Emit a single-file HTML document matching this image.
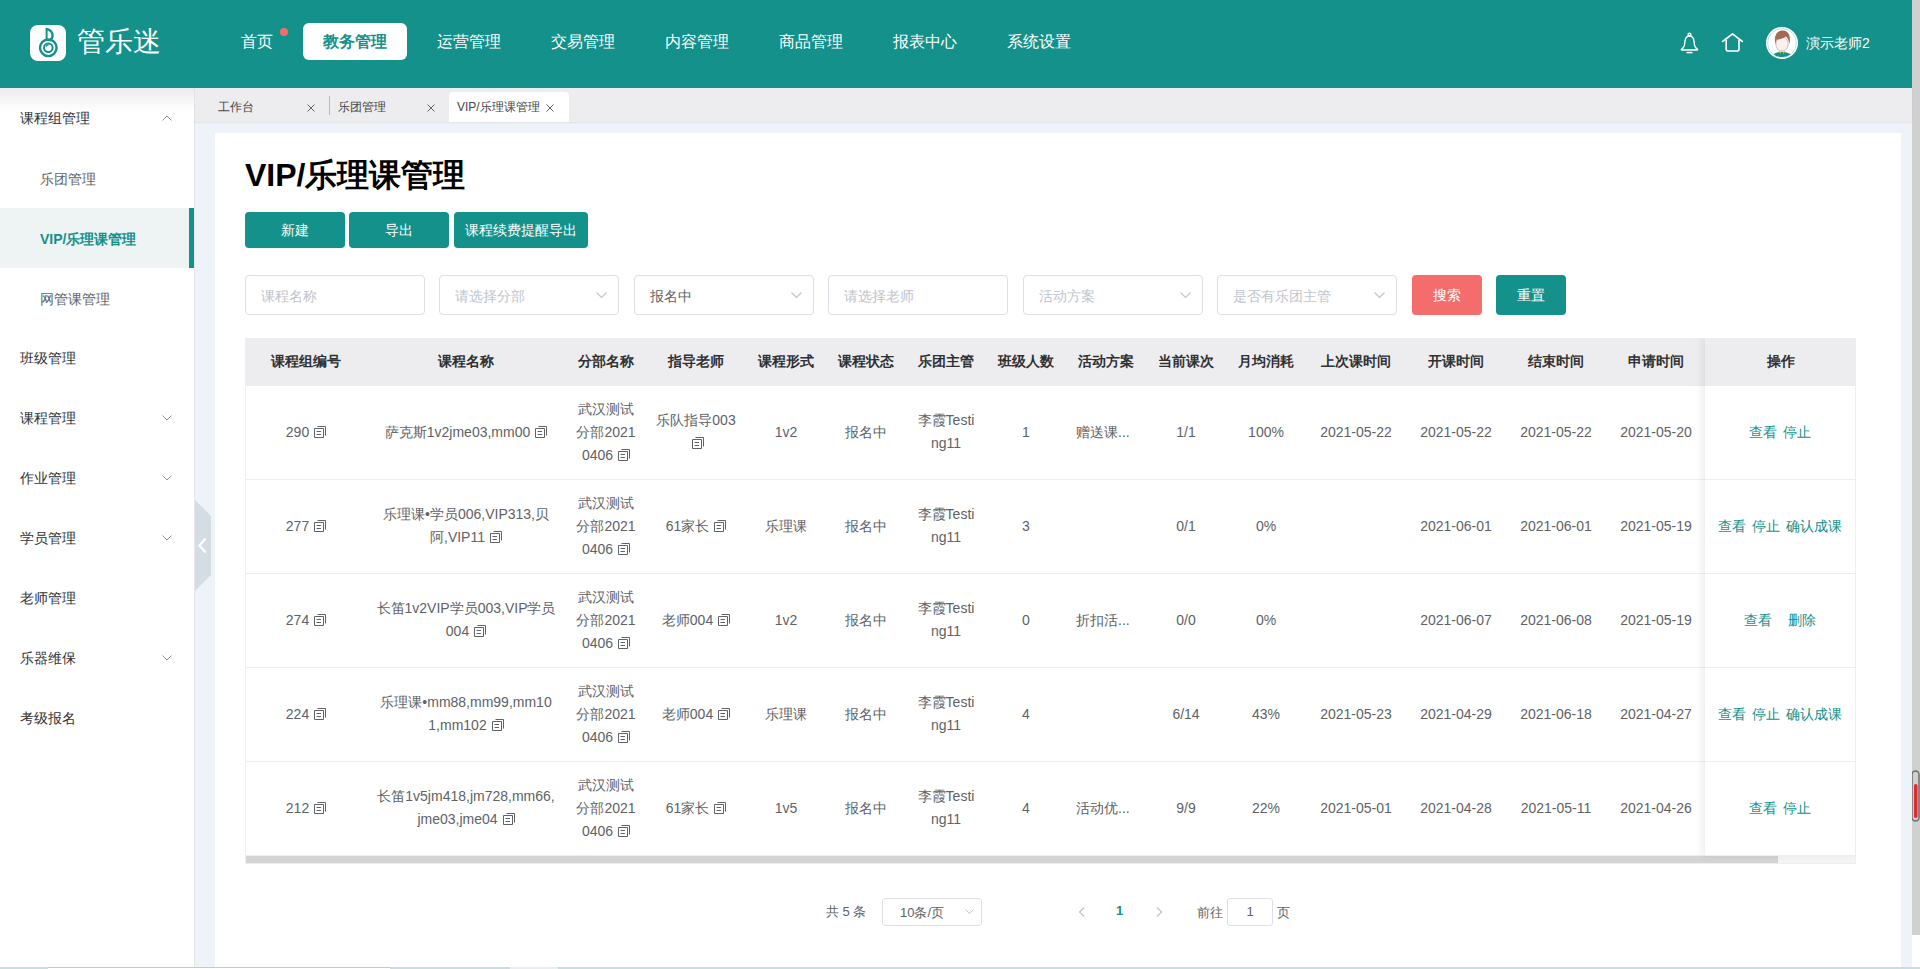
<!DOCTYPE html>
<html><head><meta charset="utf-8">
<style>
*{box-sizing:border-box;margin:0;padding:0}
html,body{width:1920px;height:969px;overflow:hidden;font-family:"Liberation Sans",sans-serif;background:#fff;color:#606266}
#hdr{position:absolute;left:0;top:0;width:1912px;height:88px;background:#14918a}
#logo{position:absolute;left:30px;top:25px;width:36px;height:36px}
#logotxt{position:absolute;left:77px;top:24px;font-size:28px;color:#fff;line-height:36px}
.nav{position:absolute;top:23px;height:37px;line-height:38px;font-size:16px;color:#fff;text-align:center}
.nav.act{background:#fff;color:#14918a;border-radius:6px;font-weight:bold}
#dot{position:absolute;left:280px;top:28px;width:8px;height:8px;border-radius:50%;background:#f56c6c}
#uname{position:absolute;left:1806px;top:33px;font-size:14px;color:#fff;line-height:20px;font-weight:500}
#vscroll{position:absolute;left:1912px;top:0;width:8px;height:935px;background:#d0d0d0}
#side{position:absolute;left:0;top:88px;width:195px;height:881px;background:#fff;border-right:1px solid #e6e6e6}
#sideshadow{position:absolute;left:0;top:88px;width:194px;height:24px;background:linear-gradient(#ececec,rgba(255,255,255,0))}
.mi{position:absolute;left:0;width:194px;height:60px;line-height:60px;font-size:14px;color:#303133;padding-left:20px}
.mi.sub{padding-left:40px;line-height:62px;color:#606266}
.mi.act{background:#eef3f3;color:#14918a!important;font-weight:bold}
.mi.act:after{content:"";position:absolute;right:0;top:0;width:5px;height:60px;background:#14918a}
.chev{position:absolute;left:162px;width:10px;height:6px}
#tabs{position:absolute;left:195px;top:88px;width:1717px;height:34px;background:#ededf0;box-shadow:0 1px 1px rgba(0,0,0,.1)}
.tab{position:absolute;top:1px;height:35px;line-height:36px;font-size:12px;color:#454545}
.tab .x{position:absolute;top:15px;width:9px;height:9px}
#main{position:absolute;left:195px;top:123px;width:1717px;height:846px;background:#eef2f9}
#card{position:absolute;left:215px;top:133px;width:1686px;height:836px;background:#fff}
#handle{position:absolute;left:195px;top:500px;width:17px;height:91px}
h1{position:absolute;left:245px;top:155px;font-size:32px;line-height:40px;color:#000;font-weight:bold}
.btn{position:absolute;top:212px;height:36px;line-height:37px;font-size:14px;color:#fff;background:#14918a;border-radius:4px;text-align:center}
.inp{position:absolute;top:275px;width:180px;height:40px;border:1px solid #dcdfe6;border-radius:4px;font-size:14px;line-height:40px;padding-left:15px;color:#c0c4cc}
.inp svg{position:absolute;left:156px;top:16px}
.sbtn{position:absolute;top:275px;width:70px;height:40px;line-height:40px;font-size:14px;color:#fff;border-radius:4px;text-align:center}
#tbl{position:absolute;left:245px;top:338px;width:1611px;height:526px;border-left:1px solid #ebeef5;border-right:1px solid #ebeef5;border-bottom:1px solid #ebeef5;overflow:hidden}
.th{position:absolute;height:48px;background:#ededf0}
.hc{position:absolute;top:0;height:48px;line-height:46px;text-align:center;font-size:14px;font-weight:bold;color:#303133}
.rl{position:absolute;left:0;width:1610px;height:1px;background:#ebeef5}
.c{position:absolute;height:93px;display:flex;align-items:center;justify-content:center;text-align:center;font-size:14px;line-height:23px;color:#606266}
.c>div{}
svg.cp{display:inline-block;margin-left:5px;vertical-align:-1px}
.c.ops{padding-right:2px}
#hs{position:absolute;left:0;top:518px;width:1610px;height:7px;background:#f5f5f5}
#hsth{position:absolute;left:0;top:0;width:1532px;height:7px;background:#d4d4d4}
#fix{position:absolute;left:1459px;top:0;width:151px;height:517px;background:#fff;box-shadow:-3px 0 8px rgba(0,0,0,.08)}
.ops a{color:#14918a;margin:0 3px;text-decoration:none}
.ops a.w{margin-left:13px}
.c.t2{padding-bottom:1px}
.c.l{justify-content:flex-start;padding-left:10px}
.pg{position:absolute;font-size:13px;color:#606266;line-height:20px}
</style></head><body>
<div id="hdr">
  <svg id="logo" width="36" height="36" viewBox="0 0 36 36"><rect x="0" y="0" width="36" height="36" rx="8" fill="#fff"/>
    <path d="M15.6 14 V2.6 C20.5 3.6 23.8 6.4 23.8 10.6 C23.8 13 22.6 15 20.4 16.6 L17.6 15.2 C20 13.8 21.4 12.4 21.4 10.4 C21.4 7.8 19.8 6 17.6 5.4 V14 Z" fill="#14918a"/>
    <circle cx="18.3" cy="22.8" r="8.3" fill="none" stroke="#14918a" stroke-width="2.4"/>
    <circle cx="18.3" cy="22.8" r="4.3" fill="none" stroke="#14918a" stroke-width="2"/>
    <path d="M16.2 21.6 A2.4 2.4 0 0 1 18.6 19.8" fill="none" stroke="#14918a" stroke-width="1.2"/>
  </svg>
  <div id="logotxt">管乐迷</div>
  <div class="nav" style="left:225px;width:64px">首页</div>
  <div id="dot"></div>
  <div class="nav act" style="left:303px;width:104px">教务管理</div>
  <div class="nav" style="left:437px;width:64px">运营管理</div>
  <div class="nav" style="left:551px;width:64px">交易管理</div>
  <div class="nav" style="left:665px;width:64px">内容管理</div>
  <div class="nav" style="left:779px;width:64px">商品管理</div>
  <div class="nav" style="left:893px;width:64px">报表中心</div>
  <div class="nav" style="left:1007px;width:64px">系统设置</div>
  <svg style="position:absolute;left:1680px;top:32px" width="19" height="22" viewBox="0 0 19 22">
    <circle cx="9.5" cy="2.6" r="1.4" fill="none" stroke="#fff" stroke-width="1.4"/>
    <path d="M9.5 4 C6.8 4 5.4 6 5 9 L4.5 13.2 C4.2 15 3.2 16 1.6 17.2 Q0.8 18 2 18 L17 18 Q18.2 18 17.4 17.2 C15.8 16 14.8 15 14.5 13.2 L14 9 C13.6 6 12.2 4 9.5 4 Z" fill="none" stroke="#fff" stroke-width="1.4" stroke-linejoin="round"/>
    <path d="M6.5 20.6 H12.5" stroke="#fff" stroke-width="1.4"/>
  </svg>
  <svg style="position:absolute;left:1721px;top:32px" width="23" height="21" viewBox="0 0 23 21">
    <path d="M1.6 9.5 L11.5 1.8 L21.4 9.5" fill="none" stroke="#fff" stroke-width="1.6" stroke-linecap="round" stroke-linejoin="round"/>
    <path d="M5.2 8 V17.4 Q5.2 19 6.8 19 H16.4 Q18 19 18 17.4 V8" fill="none" stroke="#fff" stroke-width="1.6" stroke-linecap="round"/>
  </svg>
  <svg style="position:absolute;left:1766px;top:27px" width="32" height="32" viewBox="0 0 32 32">
    <defs><clipPath id="avc"><circle cx="16" cy="16" r="14"/></clipPath></defs>
    <circle cx="16" cy="16" r="16" fill="#fff"/>
    <circle cx="16" cy="16" r="14.4" fill="none" stroke="#7cc0bb" stroke-width="0.5"/>
    <g clip-path="url(#avc)">
      <path d="M4 34 C5 27.5 9 25 16 25 C23 25 27 27.5 28 34 Z" fill="#14918a"/>
      <path d="M12.6 24.2 L14.6 27.2 L15.4 24.6 Z M19.4 24.2 L17.4 27.2 L16.6 24.6 Z" fill="#e0a316"/>
      <rect x="13.6" y="21" width="4.8" height="4" fill="#fbe9e7"/>
      <ellipse cx="16" cy="17" rx="6.2" ry="7.2" fill="#fdf0ee" stroke="#6b5550" stroke-width="0.35"/>
      <path d="M9.6 17.5 C7.6 11 9.8 3.6 16.6 3.6 C22.6 3.6 25 9 23.4 17 C22.8 13.4 21.6 10.6 19.6 9.6 C17 11.6 13 12.8 10.6 12.6 C10 14 9.8 15.6 9.6 17.5 Z" fill="#a36b56"/>
    </g>
  </svg>
  <div id="uname">演示老师2</div>
</div>
<div id="vscroll"></div>
<svg style="position:absolute;left:1911px;top:770px" width="9" height="52" viewBox="0 0 9 52"><rect x="1" y="1" width="7" height="50" rx="3.5" fill="#d0d0d0" stroke="#6d6d6d" stroke-width="1.5"/><rect x="3" y="14" width="3.5" height="34" rx="1.7" fill="#e8262e"/></svg>
<div id="side">
  <div class="mi" style="top:0">课程组管理</div>
  <div class="mi sub" style="top:60px">乐团管理</div>
  <div class="mi sub act" style="top:120px">VIP/乐理课管理</div>
  <div class="mi sub" style="top:180px">网管课管理</div>
  <div class="mi" style="top:240px">班级管理</div>
  <div class="mi" style="top:300px">课程管理</div>
  <div class="mi" style="top:360px">作业管理</div>
  <div class="mi" style="top:420px">学员管理</div>
  <div class="mi" style="top:480px">老师管理</div>
  <div class="mi" style="top:540px">乐器维保</div>
  <div class="mi" style="top:600px">考级报名</div>
  <svg class="chev" style="top:27px" viewBox="0 0 10 6"><path d="M0.5 5.5 L5 1 L9.5 5.5" fill="none" stroke="#909399" stroke-width="1"/></svg>
  <svg class="chev" style="top:327px" viewBox="0 0 10 6"><path d="M0.5 0.5 L5 5 L9.5 0.5" fill="none" stroke="#909399" stroke-width="1"/></svg>
  <svg class="chev" style="top:387px" viewBox="0 0 10 6"><path d="M0.5 0.5 L5 5 L9.5 0.5" fill="none" stroke="#909399" stroke-width="1"/></svg>
  <svg class="chev" style="top:447px" viewBox="0 0 10 6"><path d="M0.5 0.5 L5 5 L9.5 0.5" fill="none" stroke="#909399" stroke-width="1"/></svg>
  <svg class="chev" style="top:567px" viewBox="0 0 10 6"><path d="M0.5 0.5 L5 5 L9.5 0.5" fill="none" stroke="#909399" stroke-width="1"/></svg>
</div>
<div id="sideshadow"></div>
<div id="main"></div>
<div id="tabs">
  <div class="tab" style="left:23px">工作台</div>
  <svg style="position:absolute;left:112px;top:16px" width="8" height="8" viewBox="0 0 8 8"><path d="M0.5 0.5L7.5 7.5M7.5 0.5L0.5 7.5" stroke="#606266" stroke-width="1"/></svg>
  <div style="position:absolute;left:134px;top:8px;width:1px;height:19px;background:#b8b8b8"></div>
  <div class="tab" style="left:143px">乐团管理</div>
  <svg style="position:absolute;left:232px;top:16px" width="8" height="8" viewBox="0 0 8 8"><path d="M0.5 0.5L7.5 7.5M7.5 0.5L0.5 7.5" stroke="#606266" stroke-width="1"/></svg>
  <div style="position:absolute;left:254px;top:4px;width:120px;height:30px;background:#fff;border-radius:4px 4px 0 0"></div>
  <div class="tab" style="left:262px">VIP/乐理课管理</div>
  <svg style="position:absolute;left:351px;top:16px" width="8" height="8" viewBox="0 0 8 8"><path d="M0.5 0.5L7.5 7.5M7.5 0.5L0.5 7.5" stroke="#606266" stroke-width="1"/></svg>
</div>
<div id="card"></div>
<svg id="handle" viewBox="0 0 17 91"><path d="M0 0 L16 16 V75 L0 91 Z" fill="#d5dde4"/><path d="M10.5 38.5 L4.5 45.5 L10.5 52.5" fill="none" stroke="#fff" stroke-width="2.2"/></svg>
<h1>VIP/乐理课管理</h1>
<div class="btn" style="left:245px;width:100px">新建</div>
<div class="btn" style="left:349px;width:100px">导出</div>
<div class="btn" style="left:454px;width:134px">课程续费提醒导出</div>
<div class="inp" style="left:245px">课程名称</div>
<div class="inp" style="left:439px">请选择分部<svg width="11" height="7" viewBox="0 0 11 7"><path d="M0.5 0.5L5.5 5.5L10.5 0.5" fill="none" stroke="#c0c4cc" stroke-width="1.2"/></svg></div>
<div class="inp" style="left:634px;color:#606266">报名中<svg width="11" height="7" viewBox="0 0 11 7"><path d="M0.5 0.5L5.5 5.5L10.5 0.5" fill="none" stroke="#c0c4cc" stroke-width="1.2"/></svg></div>
<div class="inp" style="left:828px">请选择老师</div>
<div class="inp" style="left:1023px">活动方案<svg width="11" height="7" viewBox="0 0 11 7"><path d="M0.5 0.5L5.5 5.5L10.5 0.5" fill="none" stroke="#c0c4cc" stroke-width="1.2"/></svg></div>
<div class="inp" style="left:1217px">是否有乐团主管<svg width="11" height="7" viewBox="0 0 11 7"><path d="M0.5 0.5L5.5 5.5L10.5 0.5" fill="none" stroke="#c0c4cc" stroke-width="1.2"/></svg></div>
<div class="sbtn" style="left:1412px;background:#f56c6c">搜索</div>
<div class="sbtn" style="left:1496px;background:#14918a">重置</div>
<div id="tbl">
<div class="th" style="top:0;left:0;width:1610px"></div>
<div class="hc" style="left:0px;width:120px">课程组编号</div>
<div class="hc" style="left:120px;width:200px">课程名称</div>
<div class="hc" style="left:320px;width:80px">分部名称</div>
<div class="hc" style="left:400px;width:100px">指导老师</div>
<div class="hc" style="left:500px;width:80px">课程形式</div>
<div class="hc" style="left:580px;width:80px">课程状态</div>
<div class="hc" style="left:660px;width:80px">乐团主管</div>
<div class="hc" style="left:740px;width:80px">班级人数</div>
<div class="hc" style="left:820px;width:80px">活动方案</div>
<div class="hc" style="left:900px;width:80px">当前课次</div>
<div class="hc" style="left:980px;width:80px">月均消耗</div>
<div class="hc" style="left:1060px;width:100px">上次课时间</div>
<div class="hc" style="left:1160px;width:100px">开课时间</div>
<div class="hc" style="left:1260px;width:100px">结束时间</div>
<div class="hc" style="left:1360px;width:100px">申请时间</div>
<div class="rl" style="top:141px"></div>
<div class="c" style="left:0px;top:48px;width:120px"><div>290<svg class="cp" width="12" height="13" viewBox="0 0 12 13"><path d="M0.5 3.5H9.5V12.5H0.5Z M3.5 1.5H11.5V10.5 M2.5 6.5H7 M2.5 9.5H7" fill="none" stroke="#606266" stroke-width="1"/></svg></div></div>
<div class="c" style="left:120px;top:48px;width:200px"><div>萨克斯1v2jme03,mm00<svg class="cp" width="12" height="13" viewBox="0 0 12 13"><path d="M0.5 3.5H9.5V12.5H0.5Z M3.5 1.5H11.5V10.5 M2.5 6.5H7 M2.5 9.5H7" fill="none" stroke="#606266" stroke-width="1"/></svg></div></div>
<div class="c" style="left:320px;top:48px;width:80px"><div>武汉测试<br>分部2021<br>0406<svg class="cp" width="12" height="13" viewBox="0 0 12 13"><path d="M0.5 3.5H9.5V12.5H0.5Z M3.5 1.5H11.5V10.5 M2.5 6.5H7 M2.5 9.5H7" fill="none" stroke="#606266" stroke-width="1"/></svg></div></div>
<div class="c t2" style="left:400px;top:48px;width:100px"><div>乐队指导003<br><svg class="cp" width="12" height="13" viewBox="0 0 12 13"><path d="M0.5 3.5H9.5V12.5H0.5Z M3.5 1.5H11.5V10.5 M2.5 6.5H7 M2.5 9.5H7" fill="none" stroke="#606266" stroke-width="1"/></svg></div></div>
<div class="c" style="left:500px;top:48px;width:80px"><div>1v2</div></div>
<div class="c" style="left:580px;top:48px;width:80px"><div>报名中</div></div>
<div class="c t2" style="left:660px;top:48px;width:80px"><div>李霞Testi<br>ng11</div></div>
<div class="c" style="left:740px;top:48px;width:80px"><div>1</div></div>
<div class="c l" style="left:820px;top:48px;width:80px"><div>赠送课...</div></div>
<div class="c" style="left:900px;top:48px;width:80px"><div>1/1</div></div>
<div class="c" style="left:980px;top:48px;width:80px"><div>100%</div></div>
<div class="c" style="left:1060px;top:48px;width:100px"><div>2021-05-22</div></div>
<div class="c" style="left:1160px;top:48px;width:100px"><div>2021-05-22</div></div>
<div class="c" style="left:1260px;top:48px;width:100px"><div>2021-05-22</div></div>
<div class="c" style="left:1360px;top:48px;width:100px"><div>2021-05-20</div></div>
<div class="rl" style="top:235px"></div>
<div class="c" style="left:0px;top:142px;width:120px"><div>277<svg class="cp" width="12" height="13" viewBox="0 0 12 13"><path d="M0.5 3.5H9.5V12.5H0.5Z M3.5 1.5H11.5V10.5 M2.5 6.5H7 M2.5 9.5H7" fill="none" stroke="#606266" stroke-width="1"/></svg></div></div>
<div class="c t2" style="left:120px;top:142px;width:200px"><div>乐理课•学员006,VIP313,贝<br>阿,VIP11<svg class="cp" width="12" height="13" viewBox="0 0 12 13"><path d="M0.5 3.5H9.5V12.5H0.5Z M3.5 1.5H11.5V10.5 M2.5 6.5H7 M2.5 9.5H7" fill="none" stroke="#606266" stroke-width="1"/></svg></div></div>
<div class="c" style="left:320px;top:142px;width:80px"><div>武汉测试<br>分部2021<br>0406<svg class="cp" width="12" height="13" viewBox="0 0 12 13"><path d="M0.5 3.5H9.5V12.5H0.5Z M3.5 1.5H11.5V10.5 M2.5 6.5H7 M2.5 9.5H7" fill="none" stroke="#606266" stroke-width="1"/></svg></div></div>
<div class="c" style="left:400px;top:142px;width:100px"><div>61家长<svg class="cp" width="12" height="13" viewBox="0 0 12 13"><path d="M0.5 3.5H9.5V12.5H0.5Z M3.5 1.5H11.5V10.5 M2.5 6.5H7 M2.5 9.5H7" fill="none" stroke="#606266" stroke-width="1"/></svg></div></div>
<div class="c" style="left:500px;top:142px;width:80px"><div>乐理课</div></div>
<div class="c" style="left:580px;top:142px;width:80px"><div>报名中</div></div>
<div class="c t2" style="left:660px;top:142px;width:80px"><div>李霞Testi<br>ng11</div></div>
<div class="c" style="left:740px;top:142px;width:80px"><div>3</div></div>
<div class="c" style="left:820px;top:142px;width:80px"><div></div></div>
<div class="c" style="left:900px;top:142px;width:80px"><div>0/1</div></div>
<div class="c" style="left:980px;top:142px;width:80px"><div>0%</div></div>
<div class="c" style="left:1060px;top:142px;width:100px"><div></div></div>
<div class="c" style="left:1160px;top:142px;width:100px"><div>2021-06-01</div></div>
<div class="c" style="left:1260px;top:142px;width:100px"><div>2021-06-01</div></div>
<div class="c" style="left:1360px;top:142px;width:100px"><div>2021-05-19</div></div>
<div class="rl" style="top:329px"></div>
<div class="c" style="left:0px;top:236px;width:120px"><div>274<svg class="cp" width="12" height="13" viewBox="0 0 12 13"><path d="M0.5 3.5H9.5V12.5H0.5Z M3.5 1.5H11.5V10.5 M2.5 6.5H7 M2.5 9.5H7" fill="none" stroke="#606266" stroke-width="1"/></svg></div></div>
<div class="c t2" style="left:120px;top:236px;width:200px"><div>长笛1v2VIP学员003,VIP学员<br>004<svg class="cp" width="12" height="13" viewBox="0 0 12 13"><path d="M0.5 3.5H9.5V12.5H0.5Z M3.5 1.5H11.5V10.5 M2.5 6.5H7 M2.5 9.5H7" fill="none" stroke="#606266" stroke-width="1"/></svg></div></div>
<div class="c" style="left:320px;top:236px;width:80px"><div>武汉测试<br>分部2021<br>0406<svg class="cp" width="12" height="13" viewBox="0 0 12 13"><path d="M0.5 3.5H9.5V12.5H0.5Z M3.5 1.5H11.5V10.5 M2.5 6.5H7 M2.5 9.5H7" fill="none" stroke="#606266" stroke-width="1"/></svg></div></div>
<div class="c" style="left:400px;top:236px;width:100px"><div>老师004<svg class="cp" width="12" height="13" viewBox="0 0 12 13"><path d="M0.5 3.5H9.5V12.5H0.5Z M3.5 1.5H11.5V10.5 M2.5 6.5H7 M2.5 9.5H7" fill="none" stroke="#606266" stroke-width="1"/></svg></div></div>
<div class="c" style="left:500px;top:236px;width:80px"><div>1v2</div></div>
<div class="c" style="left:580px;top:236px;width:80px"><div>报名中</div></div>
<div class="c t2" style="left:660px;top:236px;width:80px"><div>李霞Testi<br>ng11</div></div>
<div class="c" style="left:740px;top:236px;width:80px"><div>0</div></div>
<div class="c l" style="left:820px;top:236px;width:80px"><div>折扣活...</div></div>
<div class="c" style="left:900px;top:236px;width:80px"><div>0/0</div></div>
<div class="c" style="left:980px;top:236px;width:80px"><div>0%</div></div>
<div class="c" style="left:1060px;top:236px;width:100px"><div></div></div>
<div class="c" style="left:1160px;top:236px;width:100px"><div>2021-06-07</div></div>
<div class="c" style="left:1260px;top:236px;width:100px"><div>2021-06-08</div></div>
<div class="c" style="left:1360px;top:236px;width:100px"><div>2021-05-19</div></div>
<div class="rl" style="top:423px"></div>
<div class="c" style="left:0px;top:330px;width:120px"><div>224<svg class="cp" width="12" height="13" viewBox="0 0 12 13"><path d="M0.5 3.5H9.5V12.5H0.5Z M3.5 1.5H11.5V10.5 M2.5 6.5H7 M2.5 9.5H7" fill="none" stroke="#606266" stroke-width="1"/></svg></div></div>
<div class="c t2" style="left:120px;top:330px;width:200px"><div>乐理课•mm88,mm99,mm10<br>1,mm102<svg class="cp" width="12" height="13" viewBox="0 0 12 13"><path d="M0.5 3.5H9.5V12.5H0.5Z M3.5 1.5H11.5V10.5 M2.5 6.5H7 M2.5 9.5H7" fill="none" stroke="#606266" stroke-width="1"/></svg></div></div>
<div class="c" style="left:320px;top:330px;width:80px"><div>武汉测试<br>分部2021<br>0406<svg class="cp" width="12" height="13" viewBox="0 0 12 13"><path d="M0.5 3.5H9.5V12.5H0.5Z M3.5 1.5H11.5V10.5 M2.5 6.5H7 M2.5 9.5H7" fill="none" stroke="#606266" stroke-width="1"/></svg></div></div>
<div class="c" style="left:400px;top:330px;width:100px"><div>老师004<svg class="cp" width="12" height="13" viewBox="0 0 12 13"><path d="M0.5 3.5H9.5V12.5H0.5Z M3.5 1.5H11.5V10.5 M2.5 6.5H7 M2.5 9.5H7" fill="none" stroke="#606266" stroke-width="1"/></svg></div></div>
<div class="c" style="left:500px;top:330px;width:80px"><div>乐理课</div></div>
<div class="c" style="left:580px;top:330px;width:80px"><div>报名中</div></div>
<div class="c t2" style="left:660px;top:330px;width:80px"><div>李霞Testi<br>ng11</div></div>
<div class="c" style="left:740px;top:330px;width:80px"><div>4</div></div>
<div class="c" style="left:820px;top:330px;width:80px"><div></div></div>
<div class="c" style="left:900px;top:330px;width:80px"><div>6/14</div></div>
<div class="c" style="left:980px;top:330px;width:80px"><div>43%</div></div>
<div class="c" style="left:1060px;top:330px;width:100px"><div>2021-05-23</div></div>
<div class="c" style="left:1160px;top:330px;width:100px"><div>2021-04-29</div></div>
<div class="c" style="left:1260px;top:330px;width:100px"><div>2021-06-18</div></div>
<div class="c" style="left:1360px;top:330px;width:100px"><div>2021-04-27</div></div>
<div class="rl" style="top:517px"></div>
<div class="c" style="left:0px;top:424px;width:120px"><div>212<svg class="cp" width="12" height="13" viewBox="0 0 12 13"><path d="M0.5 3.5H9.5V12.5H0.5Z M3.5 1.5H11.5V10.5 M2.5 6.5H7 M2.5 9.5H7" fill="none" stroke="#606266" stroke-width="1"/></svg></div></div>
<div class="c t2" style="left:120px;top:424px;width:200px"><div>长笛1v5jm418,jm728,mm66,<br>jme03,jme04<svg class="cp" width="12" height="13" viewBox="0 0 12 13"><path d="M0.5 3.5H9.5V12.5H0.5Z M3.5 1.5H11.5V10.5 M2.5 6.5H7 M2.5 9.5H7" fill="none" stroke="#606266" stroke-width="1"/></svg></div></div>
<div class="c" style="left:320px;top:424px;width:80px"><div>武汉测试<br>分部2021<br>0406<svg class="cp" width="12" height="13" viewBox="0 0 12 13"><path d="M0.5 3.5H9.5V12.5H0.5Z M3.5 1.5H11.5V10.5 M2.5 6.5H7 M2.5 9.5H7" fill="none" stroke="#606266" stroke-width="1"/></svg></div></div>
<div class="c" style="left:400px;top:424px;width:100px"><div>61家长<svg class="cp" width="12" height="13" viewBox="0 0 12 13"><path d="M0.5 3.5H9.5V12.5H0.5Z M3.5 1.5H11.5V10.5 M2.5 6.5H7 M2.5 9.5H7" fill="none" stroke="#606266" stroke-width="1"/></svg></div></div>
<div class="c" style="left:500px;top:424px;width:80px"><div>1v5</div></div>
<div class="c" style="left:580px;top:424px;width:80px"><div>报名中</div></div>
<div class="c t2" style="left:660px;top:424px;width:80px"><div>李霞Testi<br>ng11</div></div>
<div class="c" style="left:740px;top:424px;width:80px"><div>4</div></div>
<div class="c l" style="left:820px;top:424px;width:80px"><div>活动优...</div></div>
<div class="c" style="left:900px;top:424px;width:80px"><div>9/9</div></div>
<div class="c" style="left:980px;top:424px;width:80px"><div>22%</div></div>
<div class="c" style="left:1060px;top:424px;width:100px"><div>2021-05-01</div></div>
<div class="c" style="left:1160px;top:424px;width:100px"><div>2021-04-28</div></div>
<div class="c" style="left:1260px;top:424px;width:100px"><div>2021-05-11</div></div>
<div class="c" style="left:1360px;top:424px;width:100px"><div>2021-04-26</div></div>
<div id="hs"><div id="hsth"></div></div>
<div id="fix"><div class="th" style="top:0;left:0;width:151px"></div><div class="hc" style="left:0;width:151px">操作</div>
<div class="rl" style="top:141px;left:0;width:151px"></div>
<div class="c ops" style="left:0;top:48px;width:151px"><div><a>查看</a><a>停止</a></div></div>
<div class="rl" style="top:235px;left:0;width:151px"></div>
<div class="c ops" style="left:0;top:142px;width:151px"><div><a>查看</a><a>停止</a><a>确认成课</a></div></div>
<div class="rl" style="top:329px;left:0;width:151px"></div>
<div class="c ops" style="left:0;top:236px;width:151px"><div><a>查看</a><a class="w">删除</a></div></div>
<div class="rl" style="top:423px;left:0;width:151px"></div>
<div class="c ops" style="left:0;top:330px;width:151px"><div><a>查看</a><a>停止</a><a>确认成课</a></div></div>
<div class="rl" style="top:517px;left:0;width:151px"></div>
<div class="c ops" style="left:0;top:424px;width:151px"><div><a>查看</a><a>停止</a></div></div>
</div></div><div class="pg" style="left:826px;top:902px">共 5 条</div>
<div style="position:absolute;left:882px;top:898px;width:100px;height:28px;border:1px solid #dcdfe6;border-radius:3px"></div>
<div class="pg" style="left:900px;top:903px">10条/页</div>
<svg style="position:absolute;left:965px;top:909px" width="9" height="6" viewBox="0 0 9 6"><path d="M0.5 0.5L4.5 4.5L8.5 0.5" fill="none" stroke="#c0c4cc" stroke-width="1"/></svg>
<svg style="position:absolute;left:1078px;top:907px" width="7" height="10" viewBox="0 0 7 10"><path d="M6 0.5L1.5 5L6 9.5" fill="none" stroke="#c0c4cc" stroke-width="1.3"/></svg>
<div class="pg" style="left:1116px;top:901px;font-weight:bold;color:#14918a">1</div>
<svg style="position:absolute;left:1156px;top:907px" width="7" height="10" viewBox="0 0 7 10"><path d="M1 0.5L5.5 5L1 9.5" fill="none" stroke="#c0c4cc" stroke-width="1.3"/></svg>
<div class="pg" style="left:1197px;top:903px">前往</div>
<div style="position:absolute;left:1227px;top:898px;width:46px;height:28px;border:1px solid #dcdfe6;border-radius:3px;text-align:center;line-height:26px;font-size:13px;color:#606266">1</div>
<div class="pg" style="left:1277px;top:903px">页</div>
<div style="position:absolute;left:0;top:967px;width:1920px;height:2px;background:#c8dde0"></div><div style="position:absolute;left:48px;top:967px;width:342px;height:2px;background:#fff;border-top:1px solid #c8c8c8"></div><div style="position:absolute;left:510px;top:967px;width:48px;height:2px;background:#e6eef0"></div>
</body></html>
